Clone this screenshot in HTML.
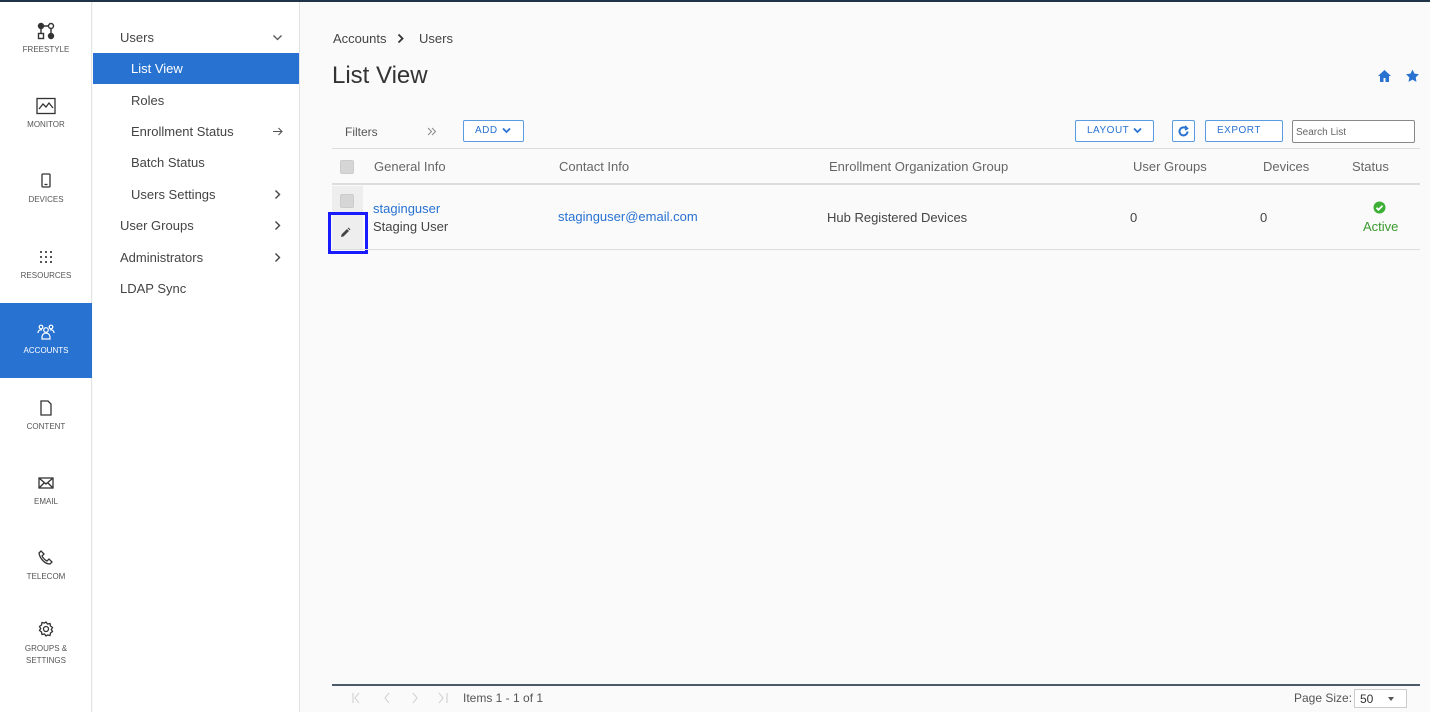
<!DOCTYPE html>
<html><head><meta charset="utf-8"><style>
*{box-sizing:border-box;margin:0;padding:0}
body{width:1430px;height:712px;overflow:hidden;font-family:"Liberation Sans",sans-serif;background:#fafafa;color:#333;position:relative}
.top{position:absolute;top:0;left:0;right:0;height:2px;background:#1f3447}
.rail{position:absolute;left:0;top:2px;width:92px;height:710px;background:#fff;border-right:1px solid #e3e3e3}
.ri{position:absolute;left:0;width:92px;height:75px;text-align:center;font-size:8px;color:#555;text-transform:uppercase}
.ri svg{display:block;margin:0 auto 5px}
.ri.act{background:#2872d1;color:#fff}
.nav{position:absolute;left:93px;top:2px;width:207px;height:710px;background:#fff;border-right:1px solid #e3e3e3}
.ni{position:absolute;left:0;width:206px;height:31px;line-height:31px;font-size:13px;color:#444}
.ni.act{background:#2872d1;color:#fff}
.ni svg{position:absolute;right:16px;top:10px}
.abs{position:absolute}
.btn{position:absolute;height:22px;border:1px solid #5b9be0;border-radius:2px;background:#fff;color:#2872d1;font-size:10px;letter-spacing:.5px;line-height:20px}
.btn svg{vertical-align:middle;margin-left:4px}
.th{position:absolute;top:159px;font-size:13px;color:#666}
.td{position:absolute;font-size:13px;color:#444}
.cb{position:absolute;width:14px;height:14px;background:#d6d6d6;border-radius:2px;border:1px solid #ccc}
.pg{position:absolute;top:690px;font-size:12px;color:#ccc}
</style></head><body>
<div class="top"></div>
<div class="rail">
 <div class="ri" style="top:20px"><svg width="18" height="18" viewBox="0 0 18 18" fill="none" stroke="#333" stroke-width="1.4"><circle cx="4" cy="4" r="2.5" fill="#333"/><circle cx="14" cy="4" r="2.5"/><rect x="1.5" y="11.5" width="5" height="5"/><circle cx="14" cy="14" r="2.5" fill="#333"/><path d="M6.5 4h5M14 6.5v5M4 6.5v5"/></svg>FREESTYLE</div>
 <div class="ri" style="top:95px"><svg width="20" height="18" viewBox="0 0 20 18" fill="none" stroke="#333" stroke-width="1.3"><rect x="1" y="1.5" width="18" height="15"/><path d="M3 12l4-5 3 3 3-4 4 5"/></svg>MONITOR</div>
 <div class="ri" style="top:170px"><svg width="14" height="18" viewBox="0 0 14 18" fill="none" stroke="#333" stroke-width="1.3"><rect x="3" y="2" width="8" height="13" rx="1"/><path d="M5.5 12.5h3"/></svg>DEVICES</div>
 <div class="ri" style="top:246px"><svg width="18" height="18" viewBox="0 0 18 18" fill="#555"><rect x="3" y="3" width="2" height="2"/><rect x="8" y="3" width="2" height="2"/><rect x="13" y="3" width="2" height="2"/><rect x="3" y="8" width="2" height="2"/><rect x="8" y="8" width="2" height="2"/><rect x="13" y="8" width="2" height="2"/><rect x="3" y="13" width="2" height="2"/><rect x="8" y="13" width="2" height="2"/><rect x="13" y="13" width="2" height="2"/></svg>RESOURCES</div>
 <div class="ri act" style="top:301px;height:75px;padding-top:20px"><svg width="18" height="18" viewBox="0 0 18 18" fill="none" stroke="#fff" stroke-width="1.2"><circle cx="9" cy="7" r="2.3"/><path d="M5 16v-2a4 4 0 0 1 8 0v2z"/><circle cx="4" cy="4" r="1.8"/><circle cx="14" cy="4" r="1.8"/><path d="M1 10a3 3 0 0 1 4-3M17 10a3 3 0 0 0-4-3"/></svg>ACCOUNTS</div>
 <div class="ri" style="top:397px"><svg width="16" height="18" viewBox="0 0 16 18" fill="none" stroke="#333" stroke-width="1.3"><path d="M3 2h7l3 3v11H3z"/></svg>CONTENT</div>
 <div class="ri" style="top:472px"><svg width="18" height="18" viewBox="0 0 18 18" fill="none" stroke="#333" stroke-width="1.3"><rect x="2" y="4" width="14" height="10"/><path d="M2 4l7 6 7-6M2 14l5-5M16 14l-5-5"/></svg>EMAIL</div>
 <div class="ri" style="top:547px"><svg width="18" height="18" viewBox="0 0 18 18" fill="none" stroke="#333" stroke-width="1.3"><path d="M4 2l3 3-2 2c1 2 3 4 5 5l2-2 3 3-2 2C8 15 3 10 2 4z"/></svg>TELECOM</div>
 <div class="ri" style="top:618px;line-height:12px"><svg width="18" height="18" viewBox="0 0 18 18" fill="none" stroke="#333" stroke-width="1.3"><circle cx="9" cy="9" r="2.5"/><path d="M9 2l1.5 2 2.5-.5.5 2.5 2 1.5-1.2 2 1.2 2-2 1.5-.5 2.5-2.5-.5L9 16l-1.5-2-2.5.5-.5-2.5-2-1.5 1.2-2-1.2-2 2-1.5.5-2.5 2.5.5z"/></svg>GROUPS &amp;<br>SETTINGS</div>
</div>
<div class="nav">
 <div class="ni" style="top:20px;padding-left:27px">Users<svg width="11" height="11" viewBox="0 0 11 11" fill="none" stroke="#555" stroke-width="1.3"><path d="M1.5 3.5l4 4 4-4"/></svg></div>
 <div class="ni act" style="top:51px;padding-left:38px">List View</div>
 <div class="ni" style="top:83px;padding-left:38px">Roles</div>
 <div class="ni" style="top:114px;padding-left:38px">Enrollment Status<svg width="11" height="11" viewBox="0 0 11 11" fill="none" stroke="#555" stroke-width="1.1"><path d="M1 5.5h9M6.5 2l3.5 3.5L6.5 9"/></svg></div>
 <div class="ni" style="top:145px;padding-left:38px">Batch Status</div>
 <div class="ni" style="top:177px;padding-left:38px">Users Settings<svg width="11" height="11" viewBox="0 0 11 11" fill="none" stroke="#444" stroke-width="1.4"><path d="M3.5 1.5l4 4-4 4"/></svg></div>
 <div class="ni" style="top:208px;padding-left:27px">User Groups<svg width="11" height="11" viewBox="0 0 11 11" fill="none" stroke="#444" stroke-width="1.4"><path d="M3.5 1.5l4 4-4 4"/></svg></div>
 <div class="ni" style="top:240px;padding-left:27px">Administrators<svg width="11" height="11" viewBox="0 0 11 11" fill="none" stroke="#444" stroke-width="1.4"><path d="M3.5 1.5l4 4-4 4"/></svg></div>
 <div class="ni" style="top:271px;padding-left:27px">LDAP Sync</div>
</div>
<div class="abs" style="left:333px;top:31px;font-size:13px;color:#444">Accounts</div>
<svg class="abs" style="left:396px;top:33px" width="9" height="11" viewBox="0 0 9 11" fill="none" stroke="#333" stroke-width="1.8"><path d="M2.5 1.5l4 4-4 4"/></svg>
<div class="abs" style="left:419px;top:31px;font-size:13px;color:#444">Users</div>
<div class="abs" style="left:332px;top:62px;font-size:24px;color:#333">List View</div>
<svg class="abs" style="left:1377px;top:69px" width="15" height="14" viewBox="0 0 15 14" fill="#2872d1"><path d="M7.5 1L1 7h2v6h3.5V9h2v4H12V7h2z"/></svg>
<svg class="abs" style="left:1405px;top:69px" width="15" height="14" viewBox="0 0 24 24" fill="#2872d1"><path d="M12 1l3.4 7 7.6 1-5.5 5.3 1.3 7.7L12 18.3 5.2 22l1.3-7.7L1 9l7.6-1z"/></svg>
<div class="abs" style="left:345px;top:125px;font-size:12px;color:#555">Filters</div>
<svg class="abs" style="left:427px;top:127px" width="10" height="9" viewBox="0 0 10 9" fill="none" stroke="#888" stroke-width="1"><path d="M1 1l3.5 3.5L1 8M5 1l3.5 3.5L5 8"/></svg>
<div class="btn" style="left:463px;top:120px;width:61px;padding-left:11px">ADD<svg width="9" height="7" viewBox="0 0 9 7" fill="none" stroke="#2872d1" stroke-width="1.8"><path d="M1 1.5l3.5 3.5L8 1.5"/></svg></div>
<div class="btn" style="left:1075px;top:120px;width:79px;padding-left:11px">LAYOUT<svg width="9" height="7" viewBox="0 0 9 7" fill="none" stroke="#2872d1" stroke-width="1.8"><path d="M1 1.5l3.5 3.5L8 1.5"/></svg></div>
<div class="btn" style="left:1172px;top:120px;width:23px"><svg style="position:absolute;left:4px;top:4px;margin:0" width="13" height="13" viewBox="0 0 13 13" fill="none" stroke="#2872d1" stroke-width="2"><path d="M10.5 6.5a4 4 0 1 1-1.5-3.2"/><path d="M8 1l2.5 2.5L8 5" stroke-width="1.6"/></svg></div>
<div class="btn" style="left:1205px;top:120px;width:78px;padding-left:11px">EXPORT</div>
<div class="abs" style="left:1292px;top:120px;width:123px;height:23px;border:1px solid #888;border-radius:2px;background:#fff;font-size:10px;color:#666;padding:6px 3px">Search List</div>
<div class="abs" style="left:332px;top:148px;width:1088px;height:1px;background:#ddd"></div>
<div class="cb" style="left:340px;top:160px"></div>
<div class="th" style="left:374px">General Info</div>
<div class="th" style="left:559px">Contact Info</div>
<div class="th" style="left:829px">Enrollment Organization Group</div>
<div class="th" style="left:1133px">User Groups</div>
<div class="th" style="left:1263px">Devices</div>
<div class="th" style="left:1352px">Status</div>
<div class="abs" style="left:332px;top:183px;width:1088px;height:2px;background:#ddd"></div>
<div class="abs" style="left:332px;top:186px;width:31px;height:64px;background:#eee"></div>
<div class="cb" style="left:340px;top:194px"></div>
<div class="abs" style="left:328px;top:212px;width:40px;height:42px;border:3px solid #1a1aff"></div>
<svg class="abs" style="left:339px;top:227px" width="12" height="12" viewBox="0 0 12 12" fill="#444"><path d="M2 10l.6-2.6L8 2l2 2-5.4 5.4zM8.7 1.3l.8-.8 2 2-.8.8z"/></svg>
<div class="td" style="left:373px;top:201px;color:#2872d1">staginguser</div>
<div class="td" style="left:373px;top:219px">Staging User</div>
<div class="td" style="left:558px;top:209px;color:#2872d1">staginguser@email.com</div>
<div class="td" style="left:827px;top:210px">Hub Registered Devices</div>
<div class="td" style="left:1130px;top:210px">0</div>
<div class="td" style="left:1260px;top:210px">0</div>
<svg class="abs" style="left:1373px;top:201px" width="13" height="13" viewBox="0 0 13 13"><circle cx="6.5" cy="6.5" r="6" fill="#3cb034"/><path d="M3.5 6.8l2 2 4-4" stroke="#fff" stroke-width="1.8" fill="none"/></svg>
<div class="td" style="left:1363px;top:219px;color:#3a9a2e">Active</div>
<div class="abs" style="left:332px;top:249px;width:1088px;height:1px;background:#ddd"></div>
<div class="abs" style="left:332px;top:684px;width:1088px;height:2px;background:#4b5a66"></div>
<svg class="abs" style="left:350px;top:692px" width="100" height="12" viewBox="0 0 100 12" fill="none" stroke="#ccc" stroke-width="1"><path d="M3 1v10M9 1L5 6l4 5M39 1l-4 5 4 5M63 1l4 5-4 5M89 1l4 5-4 5M97 1v10"/></svg>
<div class="abs" style="left:463px;top:691px;font-size:12px;color:#555">Items 1 - 1 of 1</div>
<div class="abs" style="left:1294px;top:691px;font-size:12px;color:#555">Page Size:</div>
<div class="abs" style="left:1354px;top:689px;width:53px;height:19px;border:1px solid #ccc;background:#fff;font-size:12px;color:#333;padding:2px 5px">50<svg style="position:absolute;right:12px;top:7px" width="6" height="4" viewBox="0 0 6 4" fill="#555"><path d="M0 0h6L3 4z"/></svg></div>
</body></html>
